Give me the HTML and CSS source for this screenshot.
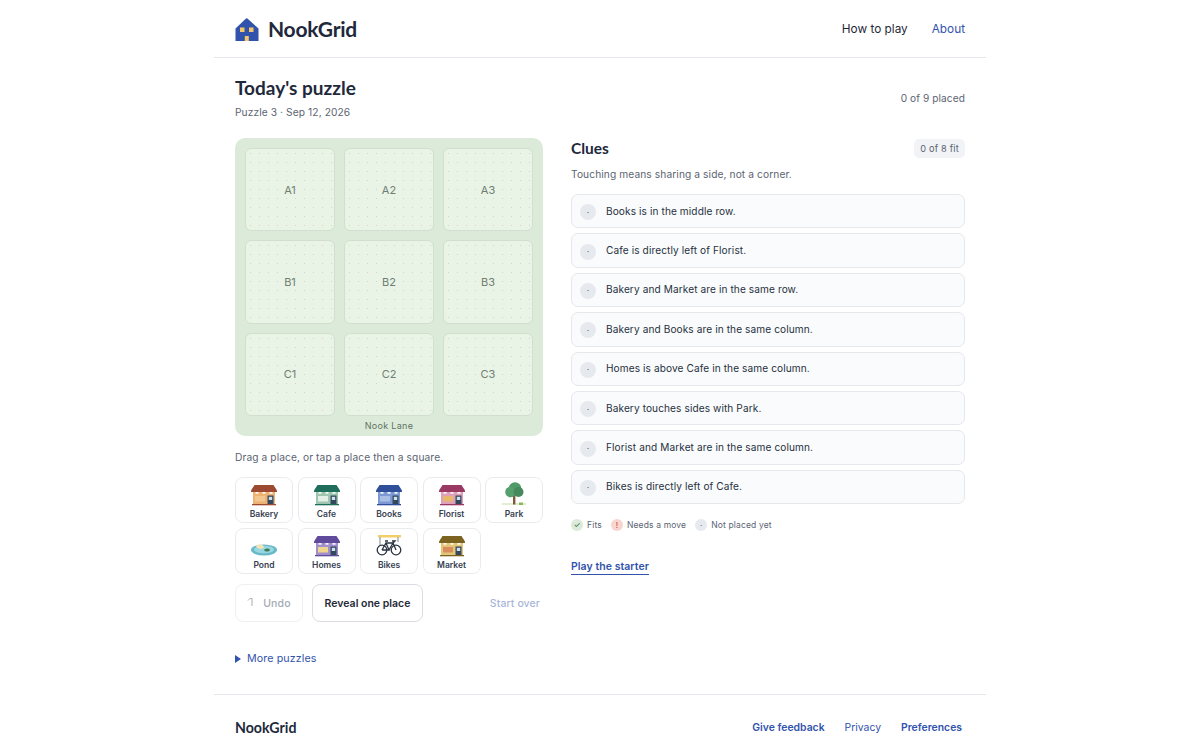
FILE: index.html
```html
<!DOCTYPE html>
<html lang="en">
<head>
    <meta charset="UTF-8">
    <meta name="viewport" content="width=device-width, initial-scale=1.0">
    <title>NookGrid</title>
    <link rel="stylesheet" href="styles.css">
</head>
<body>
    <svg class="sprites" width="0" height="0" aria-hidden="true">
        <symbol id="shop" viewBox="0 0 28 24">
            <path class="wall" d="M3 7h22v13H3z"/>
            <path class="roof" d="M4.500 1h19L27 6.500V8H1V6.500z"/>
            <path class="sill" d="M2 20h24v1.300H2z"/>
            <path fill="#fff" d="M5.500 8h3v1.800h-3zM12.500 8h3v1.800h-3zM19.500 8h3v1.800h-3z" opacity=".9"/>
            <path class="deco" d="M5 12h10v5.500H5z"/>
            <path fill="#33485f" d="M17.500 11.500h6V20h-6z"/>
            <path fill="#cfe0ea" d="M18.800 12.800h3.400v3.200h-3.400z"/>
        </symbol>
    </svg>

    <div class="page">
        <header class="top">
            <a class="brand" href="#">
                <svg class="logo" viewBox="0 0 24 24">
                    <path fill="#3253ac" d="M11 .5a1 1 0 0 1 1.400 0L23.500 10.500V23H.500V10.500z"/>
                    <path fill="#f4c869" d="M5 9.500h4.500V14H5zM14 9.500h4.500V14H14zM9.800 18h4v5h-4z"/>
                </svg>
                <span>NookGrid</span>
            </a>
            <nav class="top-nav">
                <a href="#" class="nav-dark">How to play</a>
                <a href="#">About</a>
            </nav>
        </header>

        <section class="title-row">
            <div class="title-text">
                <h1>Today's puzzle</h1>
                <p class="sub">Puzzle 3 · Sep 12, 2026</p>
            </div>
            <p class="placed">0 of 9 placed</p>
        </section>

        <main class="game">
            <div class="left">
                <div class="board">
                    <div class="cells">
                        <div class="cell">A1</div>
                        <div class="cell">A2</div>
                        <div class="cell">A3</div>
                        <div class="cell">B1</div>
                        <div class="cell">B2</div>
                        <div class="cell">B3</div>
                        <div class="cell">C1</div>
                        <div class="cell">C2</div>
                        <div class="cell">C3</div>
                    </div>
                    <div class="lane">Nook Lane</div>
                </div>

                <p class="hint">Drag a place, or tap a place then a square.</p>

                <div class="pieces">
                    <button class="piece bakery"><svg class="pic"><use href="#shop"/></svg>Bakery</button>
                    <button class="piece cafe"><svg class="pic"><use href="#shop"/></svg>Cafe</button>
                    <button class="piece books"><svg class="pic"><use href="#shop"/></svg>Books</button>
                    <button class="piece florist"><svg class="pic"><use href="#shop"/></svg>Florist</button>
                    <button class="piece">
                        <svg class="pic" viewBox="0 0 28 24">
                            <path fill="#e3efd3" d="M2 19h24v2H2z"/>
                            <path fill="#7c5a3a" d="M13 10h2.400v10.500H13z"/>
                            <circle cx="15" cy="4.500" r="6.300" fill="#4f9a68"/>
                            <circle cx="10.500" cy="8" r="5.300" fill="#569f6e"/>
                            <circle cx="18.500" cy="8" r="5" fill="#45895c"/>
                            <path fill="#8bb65a" d="M19 18.500h4V21h-4z"/>
                        </svg>Park</button>
                    <button class="piece">
                        <svg class="pic" viewBox="0 0 28 24">
                            <ellipse cx="14" cy="15" rx="13" ry="5.500" fill="#67b8c9"/>
                            <ellipse cx="14" cy="14.500" rx="10" ry="3.800" fill="#9ad6df"/>
                            <path fill="#f3e3b5" d="M6 11.500c2-3 7-3 8 1-2 2-6 2-8-1z"/>
                            <path fill="#3e7d5a" d="M14 15c2-2 5-2 6 0-1 2-5 2-6 0z"/>
                        </svg>Pond</button>
                    <button class="piece homes"><svg class="pic"><use href="#shop"/></svg>Homes</button>
                    <button class="piece">
                        <svg class="pic" viewBox="0 0 28 24">
                            <path fill="#f2cf6b" d="M3 0h23v2.500H3z"/>
                            <path stroke="#7d8a92" fill="none" stroke-width="1" d="M5 2v9M23 2v5"/>
                            <g fill="none" stroke="#2b3442" stroke-width="1.300">
                                <circle cx="7" cy="15" r="4.800"/>
                                <circle cx="21" cy="15" r="4.800"/>
                                <path d="M7 15 11 8h7l3 7M11 8l3 7H7M14 15l4-7M10 6h3M17 6h3l-2 2"/>
                            </g>
                        </svg>Bikes</button>
                    <button class="piece market"><svg class="pic"><use href="#shop"/></svg>Market</button>
                </div>

                <div class="actions">
                    <button class="btn undo" disabled>
                        <svg class="undo-icon" viewBox="0 0 8 12"><path fill="none" stroke="currentColor" stroke-width="1" d="M1 3.500 3 1.500H5V9"/></svg>
                        Undo
                    </button>
                    <button class="btn reveal">Reveal one place</button>
                    <a class="start-over" href="#">Start over</a>
                </div>

                <div class="more"><span class="arrow"></span>More puzzles</div>
            </div>

            <div class="right">
                <div class="clues-head">
                    <h2>Clues</h2>
                    <span class="fit">0 of 8 fit</span>
                </div>
                <p class="note">Touching means sharing a side, not a corner.</p>

                <ul class="clues">
                    <li><span class="mark">·</span>Books is in the middle row.</li>
                    <li><span class="mark">·</span>Cafe is directly left of Florist.</li>
                    <li><span class="mark">·</span>Bakery and Market are in the same row.</li>
                    <li><span class="mark">·</span>Bakery and Books are in the same column.</li>
                    <li><span class="mark">·</span>Homes is above Cafe in the same column.</li>
                    <li><span class="mark">·</span>Bakery touches sides with Park.</li>
                    <li><span class="mark">·</span>Florist and Market are in the same column.</li>
                    <li><span class="mark">·</span>Bikes is directly left of Cafe.</li>
                </ul>

                <div class="legend">
                    <span class="key"><span class="dot ok">✓</span>Fits</span>
                    <span class="key"><span class="dot bad">!</span>Needs a move</span>
                    <span class="key"><span class="dot">·</span>Not placed yet</span>
                </div>

                <a class="starter" href="#">Play the starter</a>
            </div>
        </main>

        <footer class="foot">
            <span class="foot-brand">NookGrid</span>
            <nav class="foot-nav">
                <a href="#" class="strong">Give feedback</a>
                <a href="#">Privacy</a>
                <a href="#" class="strong">Preferences</a>
            </nav>
        </footer>
    </div>
</body>
</html>
```

FILE: styles.css
```css
* {
    box-sizing: border-box;
}

body {
    margin: 0;
    background: #fff;
    color: #1f2937;
    font-family: Inter, "Liberation Sans", sans-serif;
    font-size: 12px;
}

a {
    color: #3253ac;
    text-decoration: none;
}

h1, h2, p, ul {
    margin: 0;
    padding: 0;
}

.sprites {
    position: absolute;
}

.page {
    width: 772px;
    margin: 0 auto;
}

/* header */
.top {
    height: 58px;
    padding: 0 21px;
    border-bottom: 1px solid #e3e6ea;
    display: flex;
    align-items: center;
    justify-content: space-between;
}

.brand {
    display: flex;
    align-items: center;
    gap: 9px;
    color: #1e293b;
    font-family: Lato, "Noto Sans", sans-serif;
    font-size: 21px;
    font-weight: 700;
    letter-spacing: -0.25px;
}

.logo {
    width: 24px;
    height: 24px;
    margin-top: 2px;
}

.top-nav {
    display: flex;
    gap: 24px;
    font-size: 11.800px;
}

.nav-dark {
    color: #1f2937;
}

/* title */
.title-row {
    padding: 0 21px;
    height: 80px;
    display: flex;
    justify-content: space-between;
    align-items: center;
}

.title-text {
    align-self: flex-start;
    padding-top: 16px;
}

h1 {
    font-family: Lato, "Noto Sans", sans-serif;
    font-size: 19px;
    font-weight: 700;
    line-height: 28px;
    color: #1e293b;
}

.sub {
    margin-top: 2px;
    font-size: 10.200px;
    letter-spacing: 0.1px;
    line-height: 16px;
    color: #5b6472;
}

.placed {
    font-size: 10.100px;
    letter-spacing: 0.1px;
    color: #5b6472;
}

/* two columns */
.game {
    padding: 0 21px;
    display: grid;
    grid-template-columns: 308px 394px;
    gap: 28px;
}

.board {
    height: 298px;
    padding: 10px 10px 0;
    background: #dcebd9;
    border-radius: 10px;
}

.cells {
    display: grid;
    grid-template-columns: repeat(3, 90px);
    grid-template-rows: repeat(3, 83.300px);
    gap: 9px;
}

.cell {
    display: flex;
    align-items: center;
    justify-content: center;
    font-size: 11px;
    color: #6f7f72;
    background-color: #e9f3e6;
    background-image: radial-gradient(circle, #cbd8c8 0.7px, transparent 1px);
    background-size: 9px 9px;
    border: 1px solid #d0dfce;
    border-radius: 6px;
}

.lane {
    margin-top: 4px;
    text-align: center;
    font-size: 9px;
    letter-spacing: 0.3px;
    line-height: 12px;
    color: #5f7163;
}

.hint {
    margin-top: 14px;
    font-size: 10.200px;
    letter-spacing: 0.1px;
    line-height: 14px;
    color: #5b6472;
}

.pieces {
    margin-top: 13px;
    display: grid;
    grid-template-columns: repeat(5, 1fr);
    gap: 4.500px;
}

.piece {
    height: 46px;
    padding: 6px 0 0;
    display: flex;
    flex-direction: column;
    align-items: center;
    background: #fff;
    border: 1px solid #e9ebef;
    border-radius: 8px;
    color: #374151;
    font-family: inherit;
    font-size: 8.500px;
    font-weight: 600;
    line-height: 12px;
}

.pic {
    width: 28px;
    height: 24px;
    overflow: visible;
}

.wall { fill: var(--wall); }
.roof { fill: var(--roof); }
.sill { fill: var(--roof); }
.deco { fill: var(--deco); }

.bakery { --roof: #9c4a32; --wall: #eeb273; --deco: #f4c791; }
.cafe { --roof: #1f6e5c; --wall: #9ec5b0; --deco: #e3efe6; }
.books { --roof: #2f4f9a; --wall: #7d99d4; --deco: #a9bfe6; }
.florist { --roof: #9a3a62; --wall: #dfa0ba; --deco: #e8b96b; }
.homes { --roof: #5f4a9c; --wall: #a08fcc; --deco: #f0d58c; }
.market { --roof: #7c6420; --wall: #e3c678; --deco: #d98d5c; }

.actions {
    margin-top: 10px;
    display: flex;
    align-items: center;
}

.btn {
    height: 38px;
    padding-top: 2px;
    background: #fff;
    border: 1px solid #d9dde3;
    border-radius: 8px;
    font-family: inherit;
    font-size: 10.500px;
    font-weight: 600;
    color: #1f2937;
}

.undo {
    width: 68px;
    margin-right: 9px;
    display: flex;
    align-items: center;
    justify-content: center;
    gap: 8px;
    border-color: #eef0f3;
    color: #a5abb5;
    font-weight: 500;
    letter-spacing: 0.2px;
}

.undo-icon {
    width: 8px;
    height: 12px;
}

.reveal {
    width: 111px;
}

.start-over {
    margin-left: auto;
    margin-right: 3px;
    margin-top: 1px;
    font-size: 10.500px;
    letter-spacing: 0.1px;
    font-weight: 500;
    color: #a9b6d8;
}

.more {
    margin-top: 29px;
    display: flex;
    align-items: center;
    gap: 6px;
    font-size: 10.700px;
    letter-spacing: 0.1px;
    line-height: 16px;
    color: #3253ac;
}

.arrow {
    width: 0;
    height: 0;
    border-left: 6px solid #3253ac;
    border-top: 4px solid transparent;
    border-bottom: 4px solid transparent;
}

/* clues */
.clues-head {
    display: flex;
    justify-content: space-between;
    align-items: center;
    height: 21px;
}

h2 {
    margin-top: -2px;
    font-family: Lato, "Noto Sans", sans-serif;
    font-size: 15.500px;
    font-weight: 700;
    color: #1e293b;
}

.fit {
    padding: 4px 6px;
    background: #f1f3f6;
    border-radius: 5px;
    font-size: 9.200px;
    letter-spacing: 0.2px;
    color: #5b6472;
}

.note {
    margin-top: 8px;
    font-size: 10.200px;
    letter-spacing: 0.1px;
    line-height: 14px;
    color: #5b6472;
}

.clues {
    margin-top: 13px;
    list-style: none;
    display: flex;
    flex-direction: column;
    gap: 5px;
}

.clues li {
    height: 34.400px;
    padding: 0 8px 1px;
    display: flex;
    align-items: center;
    gap: 10px;
    background: #fafbfd;
    border: 1px solid #e6e8ec;
    border-radius: 7px;
    font-size: 10.100px;
    letter-spacing: 0.1px;
    color: #273140;
}

.mark {
    width: 16px;
    height: 16px;
    margin-top: 3px;
    border-radius: 50%;
    background: #e6e9ee;
    display: flex;
    align-items: center;
    justify-content: center;
    font-size: 9px;
    color: #5b6472;
}

.legend {
    margin-top: 15px;
    display: flex;
    gap: 9px;
    font-size: 8.500px;
    letter-spacing: 0.15px;
    color: #5b6472;
}

.key {
    display: flex;
    align-items: center;
    gap: 4px;
}

.dot {
    width: 12px;
    height: 12px;
    border-radius: 50%;
    background: #e6e9ee;
    display: flex;
    align-items: center;
    justify-content: center;
    font-size: 8px;
}

.dot.ok {
    background: #dcebd9;
    color: #2f6b3f;
}

.dot.bad {
    background: #f8d6cf;
    color: #c0392b;
}

.starter {
    display: inline-block;
    margin-top: 29px;
    border-bottom: 1px solid #3253ac;
    font-size: 10.500px;
    letter-spacing: 0.05px;
    font-weight: 600;
    line-height: 14px;
}

/* footer */
.foot {
    margin-top: 27px;
    height: 56px;
    padding: 0 24px 0 21px;
    border-top: 1px solid #e3e6ea;
    display: flex;
    align-items: center;
    justify-content: space-between;
}

.foot-brand {
    margin-top: 10px;
    font-family: Lato, "Noto Sans", sans-serif;
    font-size: 14.200px;
    font-weight: 700;
    color: #1e293b;
}

.foot-nav {
    margin-top: 11px;
    display: flex;
    gap: 20px;
    font-size: 10.400px;
}

.strong {
    font-weight: 600;
}
```
